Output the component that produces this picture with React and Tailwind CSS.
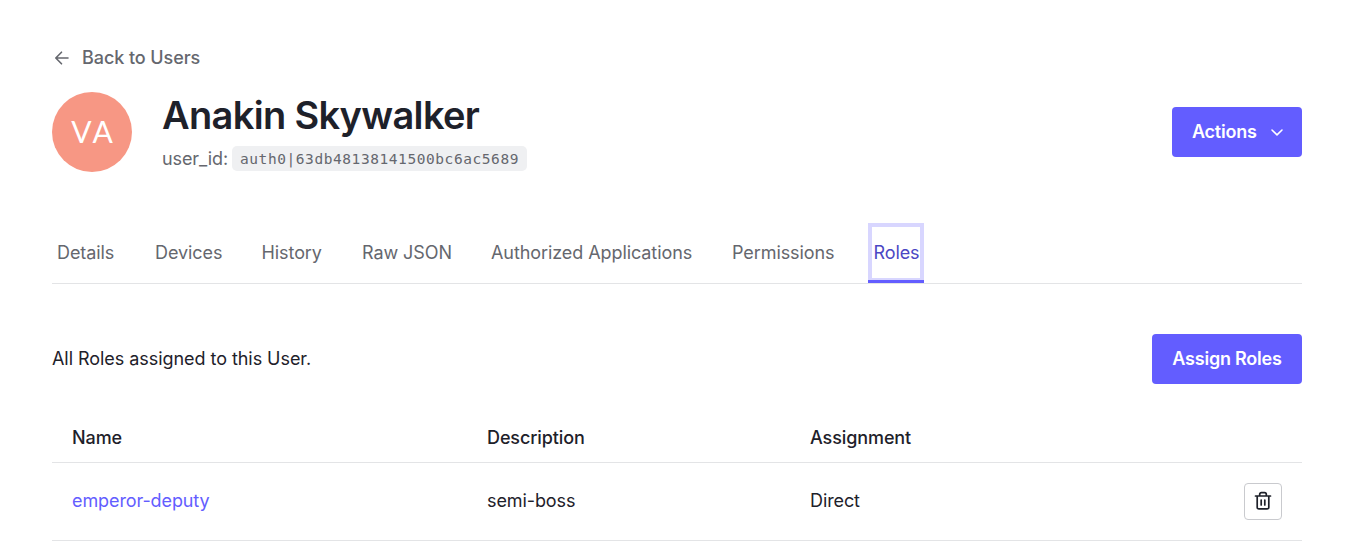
const tabs = [
  { label: "Details", box: "ml-[5px] w-[98px]" },
  { label: "Devices", box: "w-[106.5px]" },
  { label: "History", box: "w-[100.5px]" },
  { label: "Raw JSON", box: "w-[129px]" },
  { label: "Authorized Applications", box: "w-[241px]" },
  { label: "Permissions", box: "w-[136px]" },
];

function ArrowLeft() {
  return (
    <svg viewBox="0 0 16 16" className="ml-0.5 size-4" fill="none" stroke="currentColor" strokeWidth="1.6" strokeLinecap="round" strokeLinejoin="round">
      <path d="M14 8H2M7.5 2.2L1.8 8l5.7 5.8" />
    </svg>
  );
}

function ChevronDown() {
  return (
    <svg viewBox="0 0 14 14" className="size-3.5" fill="none" stroke="currentColor" strokeWidth="1.6" strokeLinecap="round" strokeLinejoin="round">
      <path d="M2 5L7 9.9 12 5" />
    </svg>
  );
}

function Trash() {
  return (
    <svg viewBox="0 0 20 20" className="size-5" fill="none" stroke="currentColor" strokeWidth="1.7" strokeLinecap="round" strokeLinejoin="round">
      <path d="M2.5 5h15M4.2 5v11.2c0 1 .7 1.7 1.7 1.7h8.2c1 0 1.7-.7 1.7-1.7V5M6.7 4.7V3.3c0-1 .7-1.7 1.7-1.7h3.2c1 0 1.7.7 1.7 1.7v1.4M8.2 9v5M11.8 9v5" />
    </svg>
  );
}

export default function App() {
  return (
    <div className="h-[545px] w-[1370px] overflow-hidden bg-white pr-[68px] pl-[52px] font-['Inter',sans-serif] text-[18px] leading-[27px] text-[#1e212a]">
      <a className="flex items-center gap-3 pt-[44px] font-medium tracking-[-0.08px] text-[#65676e]">
        <ArrowLeft />
        Back to Users
      </a>
      <header className="mt-[21px] flex h-20 items-center">
        <div className="flex size-20 items-center justify-center rounded-full bg-[#f79784] pb-0.5 pl-px font-['Lato',sans-serif] text-[30px] tracking-[1px] text-white [font-kerning:none]">VA</div>
        <div className="ml-[30px] pb-[2px]">
          <h1 className="-mt-px text-[38px] leading-[48px] font-semibold tracking-[-0.67px]">Anakin Skywalker</h1>
          <div className="mt-[7px] flex h-[25px] items-center gap-1 text-[#65676e]">
            <span className="tracking-[-0.1px]">user_id:</span>
            <code className="rounded-[5px] bg-[#eff0f2] px-2 pt-0.5 font-['DejaVu_Sans_Mono',monospace] text-[14.5px] leading-[23px] tracking-[0.57px]">auth0|63db48138141500bc6ac5689</code>
          </div>
        </div>
        <button className="ml-auto flex h-[50px] w-[130px] items-center justify-between rounded-[4px] bg-[#635dff] pr-[18px] pb-px pl-5 font-semibold tracking-[-0.22px] text-white">
          Actions
          <ChevronDown />
        </button>
      </header>
      <nav className="mt-[51px] flex h-[61px] border-b border-[#e3e4e6] tracking-[-0.08px] text-[#65676e]">
        {tabs.map((t) => (
          <a key={t.label} className={`${t.box} shrink-0 pt-4 whitespace-nowrap`}>{t.label}</a>
        ))}
        <a className="flex h-[60px] w-14 flex-col bg-[#635dff] pb-[3px] text-center text-[#4c47c4]">
          <span className="flex-1 border-4 border-b-2 border-[#d8d6ff] bg-white pt-3 pl-px">Roles</span>
        </a>
      </nav>
      <section className="mt-[50px] flex h-[50px] items-center justify-between pb-px">
        <p className="-mt-px tracking-[-0.05px]">All Roles assigned to this User.</p>
        <button className="-mb-px h-[50px] w-[150px] rounded-[4px] bg-[#635dff] pb-px font-semibold tracking-[-0.22px] text-white">Assign Roles</button>
      </section>
      <div className="mt-[30px] grid h-[49px] grid-cols-[415px_323px_1fr] border-b border-[#e3e4e6] pt-[10px] pl-5 font-medium tracking-[-0.1px]">
        <span>Name</span>
        <span>Description</span>
        <span>Assignment</span>
      </div>
      <div className="grid h-[78px] grid-cols-[415px_323px_1fr_58px] items-center border-b border-[#e3e4e6] pb-px pl-5 tracking-[-0.1px]">
        <a className="pb-0.5 text-[#635dff]">emperor-deputy</a>
        <span className="pb-0.5">semi-boss</span>
        <span className="pb-0.5">Direct</span>
        <button className="flex h-[37px] w-[38px] items-center justify-center rounded-[4px] border border-[#c9cace]">
          <Trash />
        </button>
      </div>
    </div>
  );
}
